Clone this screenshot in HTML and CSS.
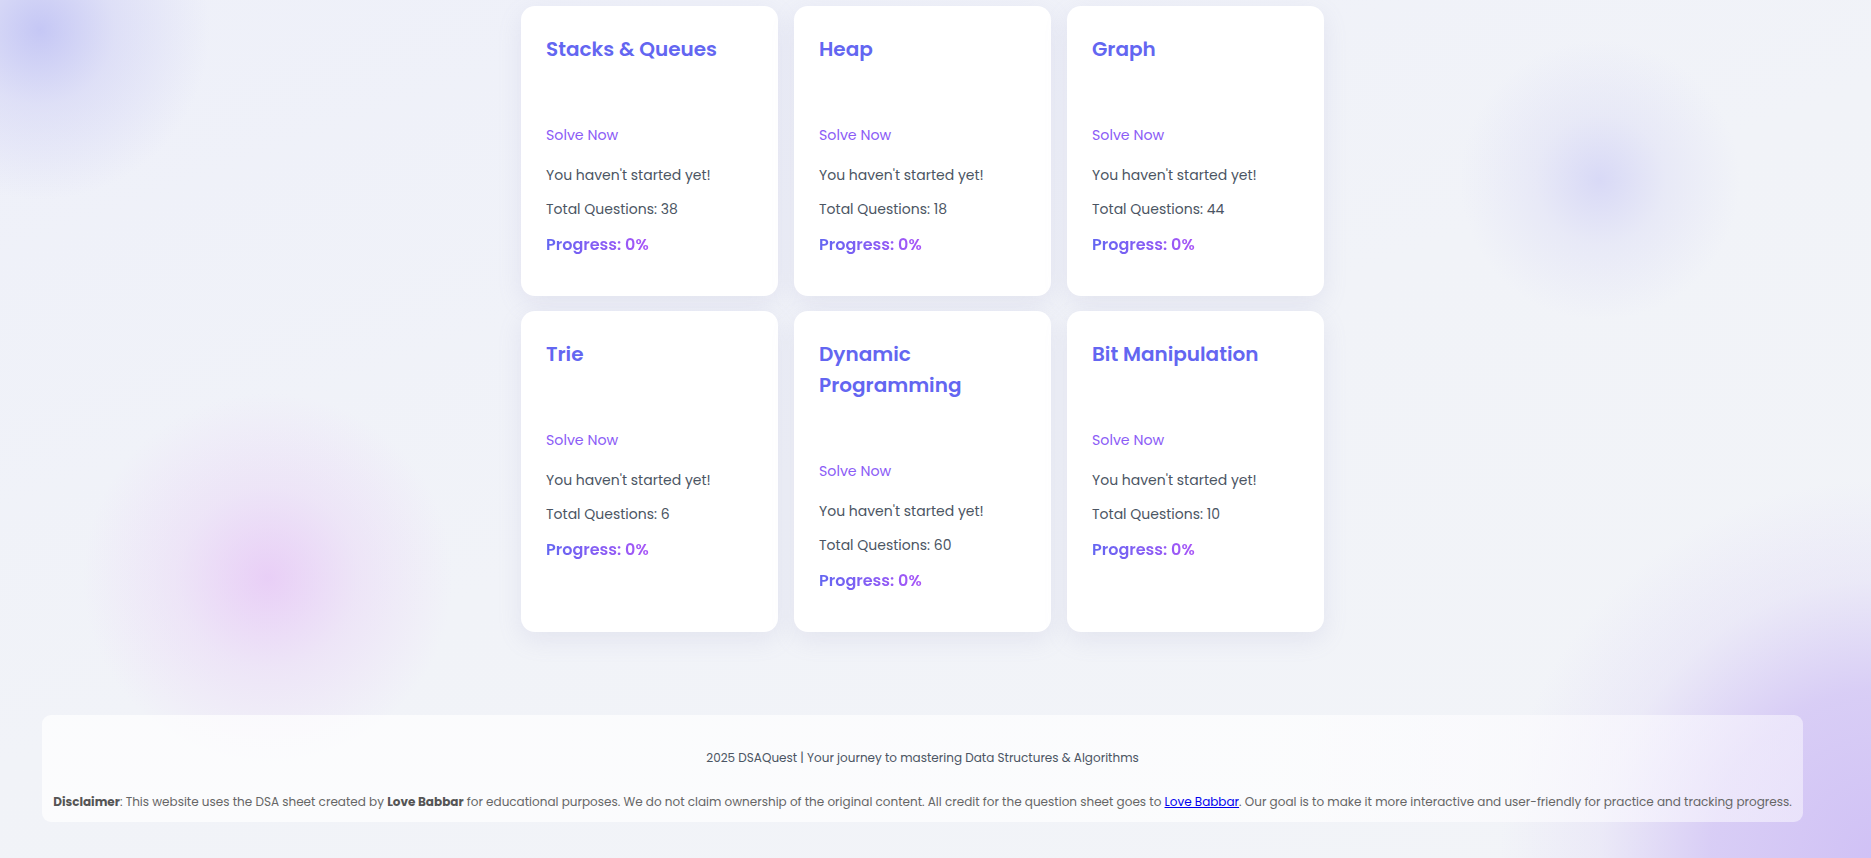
FILE: index.html
```html
<!DOCTYPE html>
<html lang="en">
<head>
<meta charset="utf-8">
<title>DSAQuest</title>
<link rel="stylesheet" href="styles.css">
</head>
<body>
<div class="page">
  <main class="grid">
    <div class="card">
      <h3 class="title">Stacks &amp; Queues</h3>
      <a class="solve" href="#">Solve Now</a>
      <p class="status">You haven't started yet!</p>
      <p class="total">Total Questions: 38</p>
      <p class="progress">Progress: 0%</p>
    </div>
    <div class="card">
      <h3 class="title">Heap</h3>
      <a class="solve" href="#">Solve Now</a>
      <p class="status">You haven't started yet!</p>
      <p class="total">Total Questions: 18</p>
      <p class="progress">Progress: 0%</p>
    </div>
    <div class="card">
      <h3 class="title">Graph</h3>
      <a class="solve" href="#">Solve Now</a>
      <p class="status">You haven't started yet!</p>
      <p class="total">Total Questions: 44</p>
      <p class="progress">Progress: 0%</p>
    </div>
    <div class="card">
      <h3 class="title">Trie</h3>
      <a class="solve" href="#">Solve Now</a>
      <p class="status">You haven't started yet!</p>
      <p class="total">Total Questions: 6</p>
      <p class="progress">Progress: 0%</p>
    </div>
    <div class="card">
      <h3 class="title">Dynamic Programming</h3>
      <a class="solve" href="#">Solve Now</a>
      <p class="status">You haven't started yet!</p>
      <p class="total">Total Questions: 60</p>
      <p class="progress">Progress: 0%</p>
    </div>
    <div class="card">
      <h3 class="title">Bit Manipulation</h3>
      <a class="solve" href="#">Solve Now</a>
      <p class="status">You haven't started yet!</p>
      <p class="total">Total Questions: 10</p>
      <p class="progress">Progress: 0%</p>
    </div>
  </main>

  <footer class="footer">
    <p class="copy">2025 DSAQuest | Your journey to mastering Data Structures &amp; Algorithms</p>
    <p class="disclaimer"><strong>Disclaimer</strong>: This website uses the DSA sheet created by <strong>Love Babbar</strong> for educational purposes. We do not claim ownership of the original content. All credit for the question sheet goes to <a class="link" href="#">Love Babbar</a>. Our goal is to make it more interactive and user-friendly for practice and tracking progress.</p>
  </footer>
</div>
</body>
</html>
```

FILE: styles.css
```css
html, body {
  margin: 0;
  padding: 0;
}

body {
  font-family: "Poppins", "Inter", "Liberation Sans", sans-serif;
  color: #4b5563;
  min-height: 858px;
  background-color: #f1f3f8;
  background-image:
    radial-gradient(circle at 40px 30px, rgba(170, 172, 242, 0.6) 0, rgba(185, 185, 242, 0.3) 75px, rgba(200, 200, 240, 0) 170px),
    radial-gradient(circle at 268px 578px, rgba(230, 195, 246, 0.75) 0, rgba(232, 208, 246, 0.4) 90px, rgba(235, 222, 245, 0) 185px),
    radial-gradient(circle at 1600px 180px, rgba(200, 200, 245, 0.6) 0, rgba(208, 208, 244, 0.28) 65px, rgba(220, 220, 245, 0) 140px),
    radial-gradient(circle at 1880px 860px, rgba(206, 190, 245, 0.95) 0, rgba(210, 196, 245, 0.8) 170px, rgba(222, 214, 246, 0.35) 280px, rgba(230, 225, 246, 0) 380px),
    linear-gradient(160deg, #eef0f9 0%, #f1f3f8 50%, #f2f4f8 100%);
  background-repeat: no-repeat;
}

.page {
  padding: 6px 26px 0 0;
  display: flex;
  flex-direction: column;
  align-items: center;
}

.grid {
  width: 803px;
  display: grid;
  grid-template-columns: repeat(3, 1fr);
  gap: 15px 16px;
}

.card {
  background: #ffffff;
  border-radius: 14px;
  padding: 28px 25px 25px;
  box-shadow: 0 8px 24px rgba(140, 140, 190, 0.14);
  display: flex;
  flex-direction: column;
  align-items: flex-start;
}

.title {
  margin: 0 0 58px;
  font-size: 20px;
  line-height: 31px;
  font-weight: 600;
  color: #6366f1;
}

.solve {
  font-size: 14.2px;
  line-height: 24px;
  color: #8b5cf6;
  text-decoration: none;
}

.status,
.total {
  margin: 0;
  font-size: 14px;
  line-height: 24px;
  color: #4b5563;
}

.status {
  margin-top: 16px;
}

.total {
  margin-top: 10px;
}

.progress {
  margin: 10px 0 13px;
  font-size: 16px;
  line-height: 27px;
  font-weight: 600;
  background: linear-gradient(90deg, #6366f1 0%, #a855f7 100%);
  -webkit-background-clip: text;
  background-clip: text;
  color: transparent;
}

.footer {
  align-self: stretch;
  margin: 83px 42px 36px;
  padding: 10px 6px;
  border-radius: 9px;
  background: linear-gradient(90deg, rgba(255, 255, 255, 0.72) 0%, rgba(255, 255, 255, 0.7) 70%, rgba(250, 248, 255, 0.55) 100%);
  text-align: center;
  font-size: 12px;
  color: #4b5563;
}

.copy {
  margin: 23px 0 24px;
  line-height: 20px;
}

.disclaimer {
  margin: 0;
  line-height: 20px;
  color: #666666;
}

.disclaimer strong {
  color: #555555;
  font-weight: 700;
}

.link {
  color: #0000ee;
  text-decoration: underline;
}
```
